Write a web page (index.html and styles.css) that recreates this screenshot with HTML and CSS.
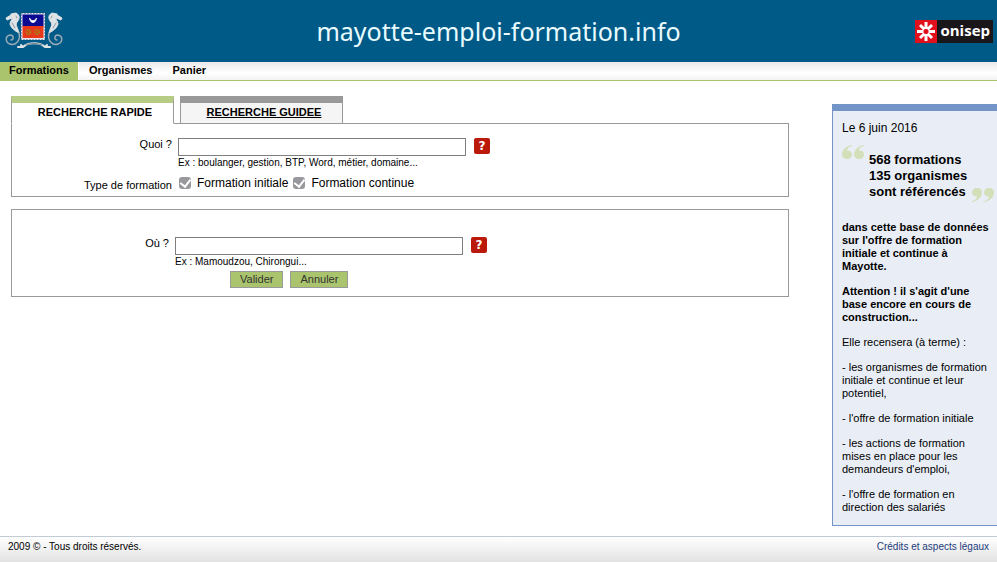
FILE: index.html
```html
<!DOCTYPE html>
<html lang="fr">
<head>
    <meta charset="UTF-8">
    <meta name="viewport" content="width=device-width, initial-scale=1.0">
    <title>mayotte-emploi-formation.info</title>
    <link rel="stylesheet" href="styles.css">
</head>
<body>
    <header class="header">
        <svg class="blason" viewBox="0 0 60 40" aria-hidden="true">
            <g fill="none" stroke="#dfe3e6" stroke-linecap="round" stroke-linejoin="round">
                <g id="hippocampe">
                    <path d="M7 3L12 2C16 4 16 8 13 11C11 14 14 17 15 22C11 20 7 17 6 13C6 10 9 8 8 7L3 9L2 7L7 4Z" fill="#dfe3e6" stroke-width="1"/>
                    <path d="M15 22C17 30 11 35 6 33C1 31 1 25 6 24C10 24 10 29 7 29" stroke="#9aa9b5" stroke-width="1.500"/>
                    <path d="M8 12l3 5M12 5l1 2" stroke="#8f9ca6" stroke-width="1"/>
                </g>
                <use href="#hippocampe" transform="matrix(-1 0 0 1 60 0)"/>
                <path d="M14 36L19 36C24 31 36 31 41 36L46 36M17 34l2 2M43 34l-2 2" stroke-width="2"/>
                <path d="M22 34q8-3 16 0" stroke="#55636d" stroke-width="1" stroke-dasharray="1 1"/>
            </g>
            <rect x="17" y="2" width="24" height="27" fill="#e6e6ee"/>
            <rect x="18.500" y="3.500" width="21" height="12" fill="#0a0a92"/>
            <rect x="18.500" y="15" width="21" height="12" fill="#e8381c"/>
            <rect x="17.500" y="2.500" width="23" height="26" fill="none" stroke="#55608a" stroke-dasharray="1 2"/>
            <path d="M25.500 7C26 13 32 13 32.500 7C31 10.500 27 10.500 25.500 7Z" fill="#fff" stroke="#fff" stroke-width=".8"/>
            <g fill="none" stroke="#9a8a14" stroke-width="2" stroke-dasharray="1 .6">
                <circle cx="24.500" cy="21" r="2"/>
                <circle cx="33" cy="21" r="2"/>
            </g>
        </svg>
        <h1 class="site-title">mayotte-emploi-formation.info</h1>
        <a href="#" class="onisep">
            <svg class="onisep-star" viewBox="0 0 22 23" aria-hidden="true">
                <g stroke="#fff" stroke-width="3">
                    <path d="M11 2v7M11 14v7M2 11.500h6.500M13.500 11.500h6.500M5 5l4.500 4.500M12.500 13.500l4.500 4.500M17 5l-4.500 4.500M9.500 13.500l-4.500 4.500"/>
                </g>
                <circle cx="11" cy="11.500" r="2" fill="#e2101c"/>
            </svg>
            <span class="onisep-name">onisep</span>
        </a>
    </header>

    <nav class="menu">
        <a href="#" class="menu-item active">Formations</a>
        <a href="#" class="menu-item">Organismes</a>
        <a href="#" class="menu-item">Panier</a>
    </nav>

    <div class="page">
        <main class="main">
            <div class="tabs">
                <a href="#" class="tab selected">RECHERCHE RAPIDE</a>
                <a href="#" class="tab">RECHERCHE GUIDEE</a>
            </div>
            <form>
                <div class="box box-quoi">
                    <div class="row">
                        <label class="label" for="quoi">Quoi ?</label>
                        <div class="field">
                            <div class="line">
                                <input type="text" id="quoi" class="input-text">
                                <button type="button" class="help">?</button>
                            </div>
                            <p class="hint">Ex : boulanger, gestion, BTP, Word, métier, domaine...</p>
                        </div>
                    </div>
                    <div class="row row-type">
                        <span class="label">Type de formation</span>
                        <div class="checks">
                            <input type="checkbox" id="initiale" class="check" checked>
                            <label for="initiale">Formation initiale</label>
                            <input type="checkbox" id="continue" class="check" checked>
                            <label for="continue">Formation continue</label>
                        </div>
                    </div>
                </div>

                <div class="box box-ou">
                    <div class="row">
                        <label class="label" for="ou">Où ?</label>
                        <div class="field">
                            <div class="line">
                                <input type="text" id="ou" class="input-text">
                                <button type="button" class="help">?</button>
                            </div>
                            <p class="hint">Ex : Mamoudzou, Chirongui...</p>
                        </div>
                    </div>
                    <div class="buttons">
                        <button type="submit" class="button">Valider</button>
                        <button type="reset" class="button">Annuler</button>
                    </div>
                </div>
            </form>
        </main>

        <aside class="sidebar">
            <p class="date">Le 6 juin 2016</p>
            <div class="quote">
                <svg class="quote-mark" viewBox="0 0 23 14" aria-hidden="true">
                    <path id="virgule" d="M10 0C4 1 0 5 0 9.500C0 12 2 14 5 14C8 14 10 12 10 9.500C10 7 8 5.500 5 5.500C5 3.500 7 1.500 10.500 .8Z"/>
                    <use href="#virgule" x="12"/>
                </svg>
                <p class="numbers">568 formations<br>135 organismes<br>sont référencés</p>
                <svg class="quote-mark quote-end" viewBox="0 0 23 14" aria-hidden="true">
                    <g transform="rotate(180 11.500 7)">
                        <use href="#virgule"/>
                        <use href="#virgule" x="12"/>
                    </g>
                </svg>
            </div>
            <p><strong>dans cette base de données sur l'offre de formation initiale et continue à Mayotte.</strong></p>
            <p><strong>Attention ! il s'agit d'une base encore en cours de construction...</strong></p>
            <p>Elle recensera (à terme) :</p>
            <p>- les organismes de formation initiale et continue et leur potentiel,</p>
            <p>- l'offre de formation initiale</p>
            <p>- les actions de formation mises en place pour les demandeurs d'emploi,</p>
            <p>- l'offre de formation en direction des salariés</p>
        </aside>
    </div>

    <footer class="footer">
        <span>2009 © - Tous droits réservés.</span>
        <a href="#">Crédits et aspects légaux</a>
    </footer>
</body>
</html>
```
FILE: styles.css
```css
* {
    box-sizing: border-box;
}

body {
    margin: 0;
    background-color: #fff;
    color: #000;
    font-family: Arial, "Liberation Sans", sans-serif;
    font-size: 11px;
    line-height: 13px;
}

p {
    margin: 0;
}

/* Header */
.header {
    display: grid;
    grid-template-columns: 1fr auto 1fr;
    align-items: center;
    height: 62px;
    padding: 0 4px;
    background-color: #005a87;
}

.blason {
    width: 60px;
    height: 40px;
}

.site-title {
    margin: 0;
    color: #e8fbff;
    font-family: "Noto Sans", sans-serif;
    font-size: 25px;
    font-weight: 400;
    line-height: 36px;
}

.onisep {
    display: flex;
    align-items: center;
    justify-self: end;
    height: 23px;
    background-color: #1a171b;
    text-decoration: none;
}

.onisep-star {
    width: 22px;
    height: 23px;
    background-color: #e2101c;
}

.onisep-name {
    padding: 0 3px 3px 3px;
    color: #fff;
    font-family: "Open Sans", sans-serif;
    font-size: 15px;
    font-weight: 700;
    line-height: 20px;
}

/* Menu */
.menu {
    display: flex;
    height: 19px;
    border-bottom: 1px solid #a9c46c;
    background: linear-gradient(#e9e9ec, #fff 60%, #f3f3f3);
}

.menu-item {
    padding: 0 10px;
    color: #000;
    font-weight: bold;
    line-height: 17px;
    text-decoration: none;
}

.menu-item.active {
    padding: 0 9px;
    border-right: 1px solid #fff;
    background-color: #a9c46c;
}

/* Page */
.page {
    display: flex;
    align-items: flex-start;
    gap: 43px;
}

.main {
    flex: 1;
    padding: 15px 0 0 11px;
}

.tabs {
    display: flex;
    gap: 6px;
}

.tab {
    position: relative;
    width: 163px;
    height: 28px;
    margin-bottom: -1px;
    padding-left: 5px;
    border: 1px solid #999;
    border-top: 7px solid #999;
    background-color: #f5f5f5;
    color: #000;
    font-weight: bold;
    line-height: 18px;
    text-align: center;
}

.tab.selected {
    border-top-color: #b6cc85;
    border-bottom-color: #fff;
    background-color: #fff;
    text-decoration: none;
}

.box {
    border: 1px solid #999;
}

.box-quoi {
    height: 74px;
    margin-bottom: 12px;
    padding: 14px 0 0 3px;
}

.box-ou {
    height: 88px;
    padding-top: 27px;
}

.row {
    display: flex;
    gap: 6px;
}

.label {
    width: 157px;
    text-align: right;
}

.line {
    display: flex;
    align-items: flex-start;
    gap: 8px;
}

.input-text {
    width: 288px;
    height: 18px;
    padding: 0 2px;
    border: 1px solid #7f7f7f;
    background-color: #fff;
    font-size: 12px;
}

.help {
    width: 16px;
    height: 16px;
    padding: 0;
    border: none;
    border-radius: 2px;
    background-color: #bb1a0a;
    color: #fff;
    font-family: "DejaVu Sans", sans-serif;
    font-size: 12px;
    font-weight: bold;
    line-height: 16px;
    cursor: pointer;
}

.hint {
    font-size: 10px;
    line-height: 14px;
}

.row-type {
    align-items: flex-end;
    margin-top: 6px;
}

.checks {
    display: flex;
    align-items: center;
    margin-bottom: 2px;
    font-size: 12px;
    line-height: 14px;
}

.checks label {
    margin-right: 4px;
}

.check {
    display: grid;
    place-items: center;
    appearance: none;
    width: 12px;
    height: 12px;
    margin: 0 6px 0 1px;
    border-radius: 3px;
    background-color: #98989d;
}

.check:checked::after {
    content: "";
    width: 5px;
    height: 8px;
    margin-bottom: 2px;
    border: solid #fff;
    border-width: 0 2px 2px 0;
    transform: rotate(38deg);
}

.buttons {
    display: flex;
    gap: 7px;
    margin-top: 2px;
    padding-left: 218px;
}

.button {
    height: 17px;
    padding: 0 9px;
    border: 1px solid #999;
    background-color: #a9c46c;
    color: #333;
    font-family: inherit;
    font-size: 11px;
    line-height: 15px;
    cursor: pointer;
}

/* Right column */
.sidebar {
    width: 165px;
    margin-top: 23px;
    padding: 11px 7px 0 9px;
    border: 1px solid #7394c6;
    border-top-width: 7px;
    border-right: none;
    background-color: #e9eef6;
}

.sidebar p {
    margin-bottom: 12px;
}

.sidebar p:last-child {
    margin-bottom: 11px;
}

.sidebar .date {
    margin-bottom: 10px;
    font-size: 12px;
}

.quote {
    display: flex;
    margin: 0 -7px 19px 0;
}

.quote-mark {
    flex: none;
    width: 23px;
    height: 14px;
    fill: #d3dfb9;
}

.quote-end {
    align-self: flex-end;
}

.sidebar .numbers {
    margin: 7px 4px 2px 4px;
    font-size: 13px;
    font-weight: bold;
    line-height: 16px;
    white-space: nowrap;
}

/* Footer */
.footer {
    display: flex;
    justify-content: space-between;
    height: 26px;
    margin-top: 10px;
    padding: 0 8px;
    border-top: 1px solid #c3cbd6;
    background: linear-gradient(#fff, #e2e2e2);
    font-size: 10px;
    line-height: 20px;
}

.footer a {
    color: #1c3c7c;
    text-decoration: none;
}
```
